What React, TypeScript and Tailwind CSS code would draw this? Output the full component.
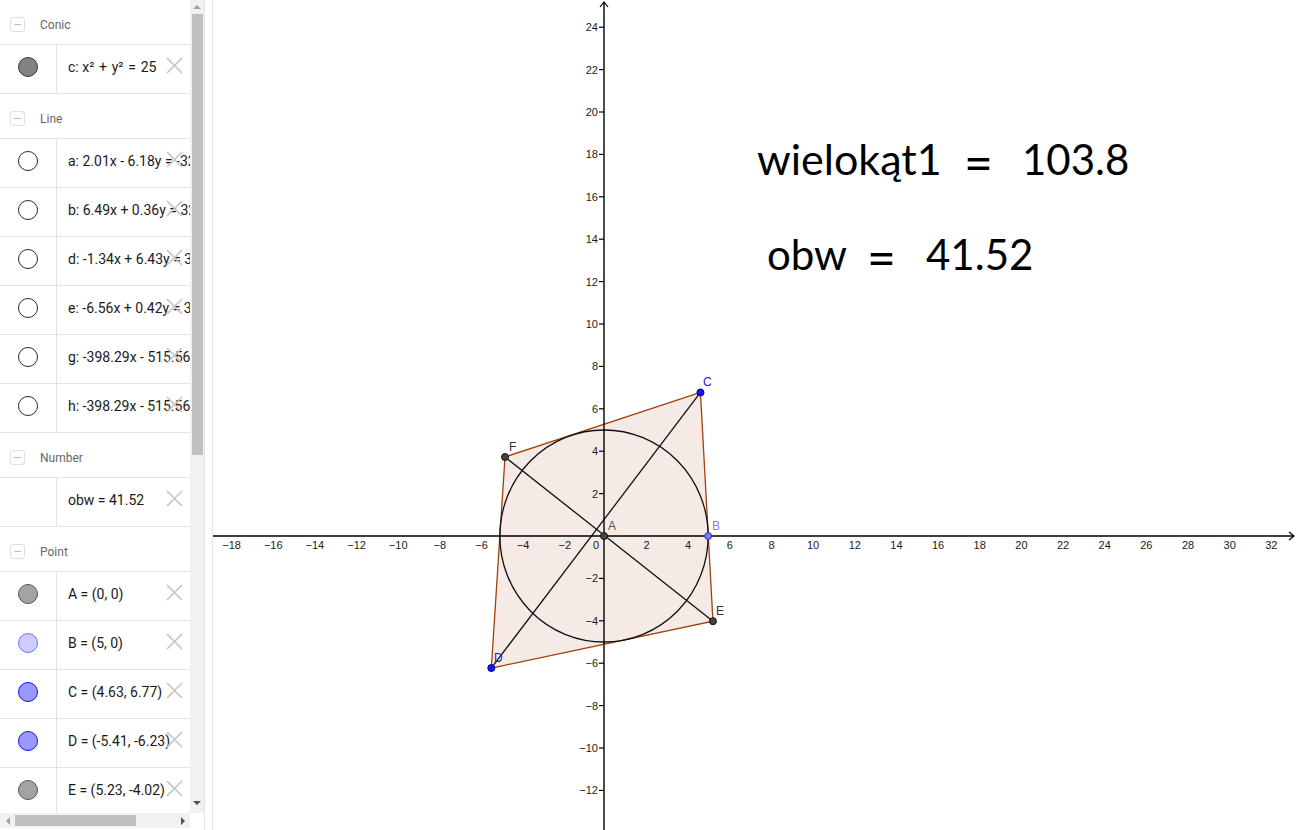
import React from "react";

const SX = 20.83;
const SY = 21.2;
const OX = 604;
const OY = 536;
const px = (x: number) => OX + x * SX;
const py = (y: number) => OY - y * SY;

function Header({ label }: { label: string }) {
  return (
    <div className="h-[45px] shrink-0 border-b border-[#e3e3e3] flex items-center">
      <div className="ml-[10px] mt-[5px] w-[15px] h-[15px] border border-[#dedede] rounded-[3px] flex items-center justify-center">
        <div className="w-[7px] h-[1.5px] bg-[#bdbdbd]" />
      </div>
      <span className="ml-[15px] text-[12px] text-[#666666] pt-[6px]" style={{ fontFamily: "Roboto, 'Liberation Sans', sans-serif" }}>
        {label}
      </span>
    </div>
  );
}

function XIcon() {
  return (
    <svg className="absolute left-[166px] top-[12px]" width="17" height="17" viewBox="0 0 17 17">
      <path d="M1 1 L16 16 M16 1 L1 16" stroke="#c4c4c4" strokeWidth="1.6" fill="none" />
    </svg>
  );
}

function Row({ icon, text }: { icon: string; text: string }) {
  let iconCls = "";
  if (icon === "conic") iconCls = "bg-[#828282] border-[#3a3a3a]";
  else if (icon === "line") iconCls = "bg-white border-[#2a2a2a]";
  else if (icon === "gray") iconCls = "bg-[#a3a3a3] border-[#555555]";
  else if (icon === "light") iconCls = "bg-[#ccccff] border-[#7070ff]";
  else if (icon === "blue") iconCls = "bg-[#9999ff] border-[#1010ff]";
  return (
    <div className="relative h-[49px] shrink-0 border-b border-[#e3e3e3] flex">
      <div className="w-[57px] shrink-0 border-r border-[#e3e3e3] flex items-center justify-center pb-[4px]">
        {icon !== "none" && <div className={"w-[20px] h-[20px] rounded-full border " + iconCls} />}
      </div>
      <div
        className="pl-[11px] flex items-center whitespace-pre text-[14px] text-[#1a1a1a] pb-[4px]"
        style={{ fontFamily: "Roboto, 'Liberation Sans', sans-serif" }}
      >
        {text}
      </div>
      <XIcon />
    </div>
  );
}

function Sidebar() {
  return (
    <div className="w-[204px] h-[830px] shrink-0 flex flex-col bg-white">
      <div className="flex h-[813px]">
        <div className="w-[190px] h-[813px] overflow-hidden flex flex-col">
          <Header label="Conic" />
          <Row icon="conic" text={"c: x²\u2004+\u2004y²\u2004=\u200425"} />
          <Header label="Line" />
          <Row icon="line" text="a: 2.01x - 6.18y = -32.51" />
          <Row icon="line" text="b: 6.49x + 0.36y = 32.45" />
          <Row icon="line" text="d: -1.34x + 6.43y = 32.74" />
          <Row icon="line" text="e: -6.56x + 0.42y = 32.79" />
          <Row icon="line" text="g: -398.29x - 515.56y = 0" />
          <Row icon="line" text="h: -398.29x - 515.56y = 0" />
          <Header label="Number" />
          <Row icon="none" text="obw = 41.52" />
          <Header label="Point" />
          <Row icon="gray" text="A = (0, 0)" />
          <Row icon="light" text="B = (5, 0)" />
          <Row icon="blue" text="C = (4.63, 6.77)" />
          <Row icon="blue" text="D = (-5.41, -6.23)" />
          <Row icon="gray" text="E = (5.23, -4.02)" />
        </div>
        <div className="w-[14px] h-[813px] bg-[#f1f1f1] flex flex-col items-center">
          <div className="h-[14px] flex items-center justify-center">
            <div className="w-0 h-0 border-l-[4px] border-r-[4px] border-b-[4px] border-l-transparent border-r-transparent border-b-[#a3a3a3]" />
          </div>
          <div className="w-[11px] h-[441px] bg-[#c1c1c1]" />
          <div className="flex-1" />
          <div className="h-[18px] flex items-center justify-center pb-[2px]">
            <div className="w-0 h-0 border-l-[4px] border-r-[4px] border-t-[4px] border-l-transparent border-r-transparent border-t-[#505050]" />
          </div>
        </div>
      </div>
      <div className="flex h-[15px]">
        <div className="w-[190px] bg-[#f1f1f1] flex items-center">
          <div className="w-[15px] flex items-center justify-center">
            <div className="w-0 h-0 border-t-[4px] border-b-[4px] border-r-[4px] border-t-transparent border-b-transparent border-r-[#a3a3a3]" />
          </div>
          <div className="w-[121px] h-[11px] bg-[#c1c1c1]" />
          <div className="flex-1" />
          <div className="w-[15px] flex items-center justify-center">
            <div className="w-0 h-0 border-t-[4px] border-b-[4px] border-l-[4px] border-t-transparent border-b-transparent border-l-[#505050]" />
          </div>
        </div>
        <div className="w-[14px] bg-white" />
      </div>
    </div>
  );
}

function Canvas() {
  const xTicks: number[] = [];
  for (let i = -18; i <= 32; i += 2) if (i !== 0) xTicks.push(i);
  const yTicks: number[] = [];
  for (let i = -12; i <= 24; i += 2) if (i !== 0) yTicks.push(i);
  const fmt = (n: number) => (n < 0 ? "\u2212" + Math.abs(n) : String(n));
  const A = [604, 536];
  const B = [px(5), 536];
  const C = [px(4.63), py(6.77)];
  const D = [px(-5.41), py(-6.23)];
  const E = [px(5.23), py(-4.02)];
  const F = [505, 457];
  const poly = [C, E, D, F].map((p) => p.join(",")).join(" ");
  const labelFont = "'Liberation Sans', Arial, sans-serif";
  const bigFont = "Lato, 'Open Sans', sans-serif";
  return (
    <div className="relative flex-1 h-[830px] bg-white overflow-hidden">
      <svg width="1083" height="830" viewBox="213 0 1083 830" className="block">
        <polygon points={poly} fill="rgba(153,51,0,0.1)" stroke="#a0400a" strokeWidth="1.3" />
        <ellipse cx={OX} cy={OY} rx={5 * SX} ry={5 * SY} fill="none" stroke="#111" strokeWidth="1.3" />
        <line x1={F[0]} y1={F[1]} x2={E[0]} y2={E[1]} stroke="#111" strokeWidth="1.3" />
        <line x1={C[0]} y1={C[1]} x2={D[0]} y2={D[1]} stroke="#111" strokeWidth="1.3" />
        {/* axes */}
        <line x1="213" y1={OY} x2="1294" y2={OY} stroke="#000" strokeWidth="1.4" />
        <path d={`M1289 ${OY - 4} L1294 ${OY} L1289 ${OY + 4}`} stroke="#000" strokeWidth="1.2" fill="none" />
        <line x1={OX} y1="2" x2={OX} y2="830" stroke="#000" strokeWidth="1.4" />
        <path d={`M${OX - 4} 7 L${OX} 2 L${OX + 4} 7`} stroke="#000" strokeWidth="1.2" fill="none" />
        {xTicks.map((t) => (
          <text
            key={"x" + t}
            x={px(t) + (t < 0 ? 2.5 : 0.8)}
            y={549}
            fontSize="11"
            textAnchor="middle"
            fill="#1a1a1a"
            fontFamily={labelFont}
          >
            {fmt(t)}
          </text>
        ))}
        <text x={599} y={549} fontSize="11" textAnchor="end" fill="#1a1a1a" fontFamily={labelFont}>
          0
        </text>
        {yTicks.map((t) => (
          <g key={"y" + t}>
            <line x1={OX - 5} y1={py(t)} x2={OX} y2={py(t)} stroke="#000" strokeWidth="1.2" />
            <text x={598} y={py(t) + 4} fontSize="11" textAnchor="end" fill="#1a1a1a" fontFamily={labelFont}>
              {fmt(t)}
            </text>
          </g>
        ))}
        {/* points */}
        <circle cx={A[0]} cy={A[1]} r="3.5" fill="#444" stroke="#111" strokeWidth="1" />
        <circle cx={B[0]} cy={B[1]} r="3.5" fill="#7a7aff" stroke="#3030c0" strokeWidth="1" />
        <circle cx={C[0]} cy={C[1]} r="3.5" fill="#1515ff" stroke="#000080" strokeWidth="1" />
        <circle cx={D[0]} cy={D[1]} r="3.5" fill="#1515ff" stroke="#000080" strokeWidth="1" />
        <circle cx={E[0]} cy={E[1]} r="3.5" fill="#444" stroke="#111" strokeWidth="1" />
        <circle cx={F[0]} cy={F[1]} r="3.5" fill="#444" stroke="#111" strokeWidth="1" />
        <text x={608} y={530} fontSize="12" fill="#555" fontFamily={labelFont}>A</text>
        <text x={712} y={530} fontSize="12" fill="#8080ff" fontFamily={labelFont}>B</text>
        <text x={703} y={386} fontSize="12" fill="#1515ff" fontFamily={labelFont}>C</text>
        <text x={494} y={662} fontSize="12" fill="#1515ff" fontFamily={labelFont}>D</text>
        <text x={716} y={615} fontSize="12" fill="#333" fontFamily={labelFont}>E</text>
        <text x={509} y={451} fontSize="12" fill="#333" fontFamily={labelFont}>F</text>
        {/* big texts */}
        <text x={757} y={175} fontSize="43" fill="#000" fontFamily={bigFont}>wielokąt1</text>
        <text x={964} y={181} fontSize="50" fill="#000" fontFamily={bigFont}>=</text>
        <text x={1022} y={175} fontSize="42" fill="#000" fontFamily={bigFont}>103.8</text>
        <text x={767} y={270} fontSize="42" fill="#000" fontFamily={bigFont}>obw</text>
        <text x={867} y={276} fontSize="50" fill="#000" fontFamily={bigFont}>=</text>
        <text x={926} y={270} fontSize="42" fill="#000" fontFamily={bigFont}>41.52</text>
      </svg>
    </div>
  );
}

export default function App() {
  return (
    <div className="w-[1296px] h-[830px] flex bg-white overflow-hidden">
      <Sidebar />
      <div className="w-[9px] h-[830px] shrink-0 border-l border-r border-[#e4e4e4] bg-white" />
      <Canvas />
    </div>
  );
}
